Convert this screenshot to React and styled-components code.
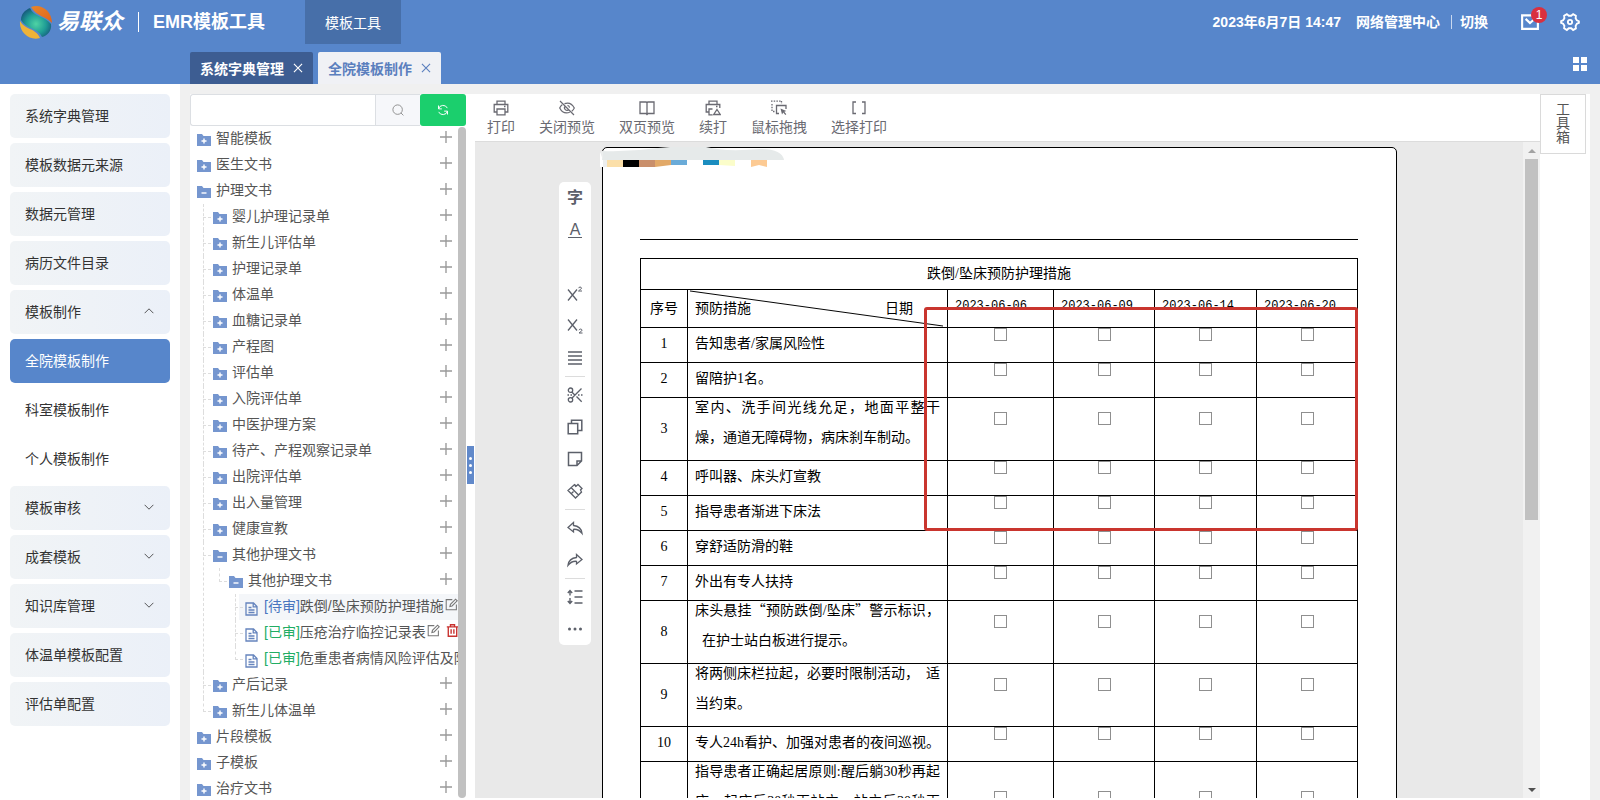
import React from "react";
import styled, { createGlobalStyle, css } from "styled-components";

const UI_FONT = `"Liberation Sans", "Noto Sans CJK SC", sans-serif`;
const DOC_FONT = `"Liberation Serif", "Noto Sans CJK SC", serif`;
const BLUE = "#5786cb";

const GlobalStyle = createGlobalStyle`
  *, *::before, *::after { box-sizing: border-box; }
  html, body { margin: 0; background: #f0f0f0; }
  body { font-family: ${UI_FONT}; font-size: 14px; color: #555; }
  button { font: inherit; color: inherit; border: 0; background: none; padding: 0; cursor: pointer; }
  ul { list-style: none; margin: 0; padding: 0; }
`;

/* ---------- icons ---------- */

const Svg = styled.svg`
  display: block;
  flex: none;
  fill: none;
  stroke: currentColor;
  stroke-width: ${(p) => p.$w || 1.3};
`;

const Icon = ({ size = 16, w, children }) => (
  <Svg viewBox="0 0 16 16" width={size} height={size} $w={w} aria-hidden="true">
    {children}
  </Svg>
);

const LogoMark = () => (
  <svg width="34" height="34" viewBox="0 0 34 34" aria-hidden="true">
    <defs>
      <radialGradient id="teal" cx="50%" cy="55%" r="55%">
        <stop offset="0" stopColor="#4fd3a4" />
        <stop offset="0.6" stopColor="#1f9d96" />
        <stop offset="1" stopColor="#17607f" />
      </radialGradient>
      <linearGradient id="orange" x1="0" y1="0" x2="1" y2="1">
        <stop offset="0" stopColor="#e8862a" />
        <stop offset="1" stopColor="#e0641b" />
      </linearGradient>
    </defs>
    <path d="M12 2 C21 -2 33 5 33 18 C27 11 18 12 12 2Z" fill="url(#orange)" />
    <path d="M11 3 C15 12 26 11 32 19 C33 26 28 31 23 32 C19 23 7 24 2 15 C2 9 6 5 11 3Z" fill="url(#teal)" />
    <path d="M1 16 C6 25 17 23 21 33 C11 36 0 28 1 16Z" fill="#efb338" />
  </svg>
);

const CloseIcon = () => <Icon size={10} w={1.8}><path d="M1.5 1.5l13 13M14.5 1.5l-13 13" /></Icon>;
const ChevronIcon = ({ up }) => <Icon size={10} w={1.3}><path d={up ? "M1 11.500L8 4.500l7 7" : "M1 4.500l7 7 7-7"} /></Icon>;
const SearchIcon = () => <Icon size={12} w={1.2}><circle cx="7.500" cy="7.500" r="6.300" /><path d="M12 12l3.200 3.200" /></Icon>;
const RefreshIcon = () => (
  <Icon size={12} w={1.3}>
    <path d="M2 6.500A6.300 6.300 0 0 1 13.800 5.500M14 9.500A6.300 6.300 0 0 1 2.200 10.500M2 2v4.500h4.500M14 14V9.500H9.500" />
  </Icon>
);
const PlusIcon = () => <Icon size={12} w={1.8}><path d="M8 0v16M0 8h16" /></Icon>;
const MailIcon = () => (
  <Icon size={20} w={1.7}><path d="M9.500 2.700H1.700v10.800h12.600V7.500M4.500 5.500L8 8.800l3-2.600" /></Icon>
);
const GearIcon = () => (
  <Icon size={20} w={1.5}>
    <circle cx="8" cy="8" r="1.700" />
    <path d="M5.500 1.700L7 3h2l1.500-1.300 2.200 1.300-.2 2 1 1.700 1.600.7v1.300l-1.600.7-1 1.700.2 2-2.200 1.300L9 13H7l-1.500 1.400L3.300 13l.2-2-1-1.600-1.600-.7V7.300l1.600-.7 1-1.600-.2-2z" />
  </Icon>
);
const TilesIcon = () => (
  <svg width="14" height="14" viewBox="0 0 14 14" fill="currentColor" aria-hidden="true">
    <path d="M0 0h6v6H0zM8 0h6v6H8zM0 8h6v6H0zM8 8h6v6H8z" />
  </svg>
);
const FolderIcon = ({ open }) => (
  <svg width="14" height="12" viewBox="0 0 14 12" aria-hidden="true">
    <path d="M0 0h5l1.500 2H14v10H0z" fill="#7596cf" />
    <path d={open ? "M4.500 7h5" : "M4.500 7h5M7 4.500v5"} stroke="#fff" strokeWidth="1.400" />
  </svg>
);
const DocIcon = () => (
  <svg width="13" height="14" viewBox="0 0 13 14" fill="none" stroke="#6584bd" strokeWidth="1.300" aria-hidden="true">
    <path d="M1 1h7.500L12 4.500V13H1zM8.200 1v3.800H12M3.500 5.500h3M3.500 8h6M3.500 10.500h6" />
  </svg>
);
const EditIcon = () => (
  <Icon size={13} w={1.3}><path d="M9 2H1.500v12.500H14V8M6 10.500l.7-2.700L13 1.500l2 2-6.300 6.300z" /></Icon>
);
const TrashIcon = () => (
  <Icon size={13} w={1.7}><path d="M1 3.500h14M5.500 3.500V1h5v2.500M2.800 3.500V15h10.400V3.500M6.300 6.500v5.500M9.700 6.500v5.500" /></Icon>
);

const PrintIcon = () => <Icon><path d="M4 4V1.200h8V4M4 12H1.200V4.500h13.600V12H12M4 9h8v5.800H4zM11 6.500h1.500" /></Icon>;
const EyeOffIcon = () => (
  <Icon w={1.2}><path d="M1 1l14 14M5.500 3.600C10 2 13.500 4.500 15.300 8c-.6 1.300-1.500 2.400-2.500 3.200M10.800 12.300C6 14 2.500 11.500.7 8 1.300 6.700 2.100 5.600 3.200 4.700M6.300 6a2.600 2.600 0 0 0 3.700 3.700M8.500 5.400a2.600 2.600 0 0 1 2.100 2.200" /></Icon>
);
const BookIcon = () => <Icon><path d="M1 2h6.200L8 2.800 8.800 2H15v11.500H9L8 14.500l-1-1H1zM8 3v11" /></Icon>;
const ContinueIcon = () => (
  <Icon><path d="M4 4V1.200h8V4M4 12H1.200V4.500h13.600V8M7.500 9H4v5.800h3.500M11 6.500h1.500M12 9.500l3.300 5H8.700z" /></Icon>
);
const DragIcon = () => (
  <Icon>
    <path d="M0 1.200h10M1 4v8M3.500 11.500H1M10.500 1v3" strokeDasharray="1.500 1.200" />
    <path d="M8 13.500H5.500v-8h9.500V9" />
    <path d="M9.500 8.500l1.500 6 1.300-2 2 2.500 1-.8-2-2.400 2-.8z" fill="currentColor" stroke="none" />
  </Icon>
);
const BracketsIcon = () => <Icon><path d="M5 2H2v11.500h3M11 2h3v11.500h-3" /></Icon>;

const SuperIcon = () => (
  <Icon><path d="M1 3.500l9 11M10 3.500l-9 11" /><path d="M11.500 2.200c.3-1.500 3-1.500 3 0 0 .9-2 1.700-3 2.800h3.500" strokeWidth="1" /></Icon>
);
const SubIcon = () => (
  <Icon><path d="M1 1.500l9 11M10 1.500l-9 11" /><path d="M12 12.200c.3-1.500 3-1.500 3 0 0 .9-2 1.700-3 2.800h3.500" strokeWidth="1" /></Icon>
);
const JustifyIcon = () => <Icon w={1.3}><path d="M1 2h14M1 6h14M1 10h14M1 14h14" /></Icon>;
const ScissorsIcon = () => (
  <Icon w={1.3}>
    <circle cx="3.500" cy="3.200" r="2.200" /><circle cx="3.500" cy="12.800" r="2.200" />
    <path d="M4.800 5l3 3M4.800 11.200L14.500 1.500M9.500 9.500l5.200 5.200M11 8h1.500M14 8h1.500M.5 8H2M3.500 8H5" />
  </Icon>
);
const CopyIcon = () => <Icon w={1.5}><path d="M1.200 4.500h9.500v10.300H1.200zM4.500 4.500V1.200h10.300v10.300h-4" /></Icon>;
const NoteIcon = () => <Icon w={1.5}><path d="M1.500 1.500h13v8.500l-4.500 4.500H1.500zM14.500 10H10v4.500" /></Icon>;
const BrushIcon = () => (
  <Icon w={1.3}><path d="M1 7.500L8.500 15l6-6-1-2L15 5.500 12.500 3 11 1.500 9.500 3 7.500 1.500zM4 4.500l7.500 7.500M7.500 1.500l1.500 2.500M4.500 10.500l2-2" /></Icon>
);
const UndoIcon = () => <Icon><path d="M6.500 2.500L1 7.500l5.500 4.500V9.300c3.500-.3 6 .8 8.500 4-.5-4-3-7.300-8.500-7.800z" /></Icon>;
const RedoIcon = () => <Icon><path d="M9.500 2.500L15 7.500 9.500 12V9.300c-3.500-.3-6 .8-8.500 4 .5-4 3-7.300 8.500-7.800z" /></Icon>;
const LineHeightIcon = () => (
  <Icon w={1.4}><path d="M3 2v4.500M.8 4L3 1.500 5.200 4M3 9v5M.8 12L3 14.500 5.200 12M7.500 2H15.500M7.500 8h8M7.500 14h8" /></Icon>
);
const DotsIcon = () => (
  <Icon><g fill="currentColor" stroke="none"><circle cx="2.500" cy="8" r="1.500" /><circle cx="8" cy="8" r="1.500" /><circle cx="13.500" cy="8" r="1.500" /></g></Icon>
);

/* ---------- header ---------- */

const Shell = styled.div`
  display: flex;
  flex-direction: column;
  height: 100vh;
  overflow: hidden;
`;

const Header = styled.header`
  flex: none;
  background: ${BLUE};
  color: #fff;
`;

const TopBar = styled.div`
  display: flex;
  align-items: center;
  height: 44px;
  padding-right: 20px;
`;

const Brand = styled.div`
  display: flex;
  align-items: center;
  width: 305px;
  padding-left: 19px;
`;

const BrandName = styled.span`
  margin-left: 4px;
  font-size: 22px;
  font-style: italic;
  font-weight: bold;
  line-height: 32px;
`;

const BrandTitle = styled.h1`
  margin: 0 0 0 15px;
  padding-left: 14px;
  border-left: 1px solid #fff;
  font-size: 18px;
  line-height: 20px;
`;

const ModuleButton = styled.button`
  align-self: stretch;
  width: 96px;
  background: #476fa9;
`;

const Account = styled.div`
  display: flex;
  align-items: center;
  margin-left: auto;
  font-weight: bold;
  line-height: 20px;
`;

const Center = styled.span`
  margin-left: 15px;
`;

const SwitchLink = styled.a`
  margin-left: 11px;
  padding-left: 8px;
  border-left: 1px solid #c9d8ef;
  color: inherit;
  line-height: 14px;
  text-decoration: none;
`;

const HeaderIconButton = styled.button`
  position: relative;
  margin-left: ${(p) => p.$gap}px;
`;

const Badge = styled.span`
  position: absolute;
  top: -5px;
  right: -7px;
  width: 16px;
  height: 16px;
  border-radius: 8px;
  background: #d9303f;
  font-size: 12px;
  font-weight: normal;
  line-height: 16px;
  text-align: center;
`;

const TabBar = styled.div`
  display: flex;
  align-items: flex-end;
  gap: 5px;
  height: 40px;
  padding: 0 13px 0 190px;
`;

const Tab = styled.div`
  display: flex;
  align-items: center;
  gap: 9px;
  height: 32px;
  padding: 0 10px;
  border-radius: 2px 2px 0 0;
  font-weight: bold;
  background: ${(p) => (p.$active ? "#f0f1f5" : "#3d5d92")};
  color: ${(p) => (p.$active ? "#5b7fbe" : "#fff")};
`;

const TilesButton = styled.button`
  align-self: center;
  margin-left: auto;
  line-height: 0;
`;

/* ---------- side navigation ---------- */

const Body = styled.div`
  flex: 1;
  display: flex;
  min-height: 0;
`;

const SideNav = styled.nav`
  flex: none;
  display: flex;
  flex-direction: column;
  gap: 5px;
  width: 180px;
  padding: 10px;
  background: #fff;
`;

const NavButton = styled.button`
  display: flex;
  align-items: center;
  justify-content: space-between;
  height: 44px;
  padding: 0 16px 2px 15px;
  border-radius: 5px;
  color: #333;
  background: linear-gradient(90deg, #f1f4f6, #ebf0f8);
  ${(p) => p.$kind === "sub" && css`background: none;`}
  ${(p) => p.$kind === "active" && css`background: ${BLUE}; color: #fff;`}
`;

/* ---------- template tree ---------- */

const Main = styled.main`
  flex: 1;
  display: flex;
  min-width: 0;
  padding: 10px 10px 0;
`;

const TreePanel = styled.section`
  flex: none;
  display: flex;
  flex-direction: column;
  width: 276px;
  padding-bottom: 2px;
  background: #fff;
`;

const SearchBar = styled.form`
  flex: none;
  display: flex;
  height: 32px;
`;

const SearchInput = styled.input`
  flex: 1;
  min-width: 0;
  border: 1px solid #dcdfe3;
  border-right: 0;
  border-radius: 3px 0 0 3px;
  padding: 0 10px;
  font: inherit;
  outline: none;
`;

const SearchButton = styled.button`
  display: grid;
  place-items: center;
  width: 45px;
  border: 1px solid #dcdfe3;
  border-right: 0;
  background: #f6f7fa;
  color: #888;
`;

const RefreshButton = styled.button`
  display: grid;
  place-items: center;
  width: 46px;
  border-radius: 3px;
  background: #1bcf6d;
  color: #fff;
`;

const TreeScroll = styled.div`
  flex: 1;
  display: flex;
  min-height: 0;
`;

const TreeRoot = styled.ul`
  flex: 1;
  min-width: 0;
  overflow: hidden;
`;

const Branch = styled.ul`
  margin-left: 16px;
`;

const TreeItem = styled.li`
  position: relative;

  /* guide lines joining a nested item to its parent */
  ${Branch} > &::before {
    content: "";
    position: absolute;
    left: -3px;
    top: 0;
    bottom: 0;
    border-left: 1px dashed #ddd;
  }
  ${Branch} > &:last-child::before {
    bottom: auto;
    height: 14px;
  }
  ${Branch} > &::after {
    content: "";
    position: absolute;
    left: -3px;
    top: 13px;
    width: 8px;
    border-top: 1px dashed #ddd;
  }
`;

const TreeRow = styled.div`
  display: flex;
  align-items: flex-start;
  height: 26px;
  margin-left: 1px;
  padding: 0 6px;
  line-height: 24px;
  white-space: nowrap;
  background: ${(p) => (p.$selected ? "#f4f6f9" : "none")};
`;

const TreeGlyph = styled.span`
  flex: none;
  width: 19px;
  padding-top: 8px;
  line-height: 0;
`;

const Status = styled.span`
  color: ${(p) => (p.$done ? "#22ad64" : "#4a76bf")};
`;

const AddButton = styled.button`
  margin: 5px 0 0 auto;
  color: #999;
`;

const RowAction = styled.button`
  margin: ${(p) => (p.$danger ? "4px 0 0 6px" : "4px 0 0 1px")};
  color: ${(p) => (p.$danger ? "#c8322f" : "#777")};
`;

const TreeThumb = styled.div`
  flex: none;
  width: 8px;
  margin-top: 1px;
  border-radius: 4px;
  background: #c1c1c1;
`;

const Splitter = styled.div`
  flex: none;
  display: flex;
  align-items: center;
  justify-content: center;
  width: 9px;
  padding-top: 36px;
  background: #fff;
`;

const SplitHandle = styled.button`
  display: flex;
  flex-direction: column;
  align-items: center;
  justify-content: center;
  gap: 4px;
  width: 7px;
  height: 38px;
  background: #6189ca;
`;

const Dot = styled.i`
  width: 3px;
  height: 3px;
  border-radius: 2px;
  background: #fff;
`;

/* ---------- work area ---------- */

const Work = styled.section`
  flex: 1;
  display: flex;
  flex-direction: column;
  min-width: 0;
  padding-bottom: 2px;
  background: #fff;
`;

const Toolbar = styled.div`
  flex: none;
  display: flex;
  gap: 24px;
  height: 48px;
  padding: 6px 12px 0;
  border-bottom: 1px solid #dcdcdc;
`;

const ToolButton = styled.button`
  display: flex;
  flex-direction: column;
  align-items: center;
  height: 36px;
  color: #6a6a72;
  line-height: 22px;
`;

const Viewport = styled.div`
  flex: 1;
  display: flex;
  min-height: 0;
  background: #e9e9e9;
`;

const Canvas = styled.div`
  flex: 1;
  min-width: 0;
  padding: 5px 0 0 1px;
  overflow: hidden;
`;

const ScrollTrack = styled.div`
  flex: none;
  display: flex;
  flex-direction: column;
  align-items: center;
  width: 17px;
  background: #f1f1f1;
`;

const ScrollArrow = styled.span`
  display: grid;
  place-items: center;
  height: 17px;
  &::before {
    content: "";
    border: 4px solid transparent;
    ${(p) => (p.$down
      ? css`border-top-color: #505050; border-bottom: 0;`
      : css`border-bottom-color: #a3a3a3; border-top: 0;`)}
  }
`;

const ScrollThumb = styled.div`
  width: 13px;
  height: 55%;
  margin-bottom: auto;
  background: #c1c1c1;
`;

const Paper = styled.article`
  position: relative;
  width: 795px;
  margin: 0 auto;
  padding: 0 38px 40px 37px;
  border: 1px solid #000;
  border-radius: 5px;
  background: #fff;
  color: #000;
  font-family: ${DOC_FONT};
`;

const PageHead = styled.div`
  height: 92px;
  margin-bottom: 18px;
  border-bottom: 1px solid #000;
`;

const Redaction = styled.svg`
  position: absolute;
  top: -1px;
  left: -3px;
`;

const FloatBar = styled.div`
  position: absolute;
  top: 34px;
  left: -44px;
  display: flex;
  flex-direction: column;
  width: 32px;
  border-radius: 5px;
  background: #fff;
  color: #5c606a;
  font-family: ${UI_FONT};
`;

const FloatButton = styled.button`
  display: grid;
  place-items: center;
  height: 32px;
  font-size: 16px;
  font-weight: ${(p) => (p.$bold ? "bold" : "normal")};
  line-height: 18px;
`;

const FloatGap = styled.span`
  height: 32px;
`;

const FloatRule = styled.hr`
  width: 20px;
  height: 1px;
  margin: 2px auto;
  border: 0;
  background: #dcdcdc;
`;

const Underlined = styled.span`
  width: 14px;
  border-bottom: 1px solid currentColor;
  line-height: 15px;
`;

const FormArea = styled.div`
  position: relative;
`;

const FormTable = styled.table`
  width: 100%;
  table-layout: fixed;
  border-collapse: collapse;
`;

const Column = styled.col`
  width: ${(p) => p.$w}px;
`;

const Cell = styled.td`
  height: ${(p) => p.$h || 35}px;
  padding: 0 7px ${(p) => (p.$raised ? 2 : 0)}px;
  border: 1px solid #000;
  font-weight: normal;
  line-height: 30px;
  text-align: ${(p) => (p.$text ? "left" : "center")};
  vertical-align: ${(p) => (p.$top ? "top" : "middle")};
  white-space: nowrap;
`;

const HeadCell = styled(Cell).attrs({ as: "th" })``;

const DateCell = styled(HeadCell)`
  font-family: "Liberation Mono", monospace;
  font-size: 12px;
  line-height: 32px;
  text-align: left;
  vertical-align: top;
`;

const SplitCell = styled(HeadCell)`
  position: relative;
`;

const SplitLabels = styled.div`
  display: flex;
  justify-content: space-between;
  padding-right: 27px;
`;

const Diagonal = styled.svg`
  position: absolute;
  inset: 0;
  width: 100%;
  height: 100%;
`;

const Lines = styled.div`
  margin-top: ${(p) => (p.$multi ? -5 : 0)}px;
`;

const Line = styled.div`
  height: 30px;
  text-align-last: ${(p) => (p.$justify ? "justify" : "auto")};
`;

const FullWidth = styled.span`
  font-family: "Noto Sans CJK SC", sans-serif;
  line-height: 14px;
`;

const CheckBox = styled.input`
  appearance: none;
  display: block;
  width: 13px;
  height: 13px;
  margin: 0 auto 21px;
  border: 1px solid #8f8f8f;
  background: #fff;
`;

const Highlight = styled.div`
  position: absolute;
  top: 49px;
  right: 0;
  width: 434px;
  height: 224px;
  border: 3px solid #c9352e;
  border-radius: 3px;
  pointer-events: none;
`;

const ToolboxRail = styled.aside`
  flex: none;
  width: 50px;
  background: #fff;
`;

const ToolboxTab = styled.button`
  width: 46px;
  height: 60px;
  padding: 0 15px 2px;
  border: 1px solid #dadada;
  line-height: 14px;
`;

/* ---------- data ---------- */

const NAV = [
  ["系统字典管理"], ["模板数据元来源"], ["数据元管理"], ["病历文件目录"],
  ["模板制作", "open"], ["全院模板制作", "active"], ["科室模板制作", "sub"], ["个人模板制作", "sub"],
  ["模板审核", "closed"], ["成套模板", "closed"], ["知识库管理", "closed"],
  ["体温单模板配置"], ["评估单配置"],
];

const leaf = (name) => ({ name });

const TREE = [
  leaf("智能模板"),
  leaf("医生文书"),
  {
    name: "护理文书",
    children: [
      ...["婴儿护理记录单", "新生儿评估单", "护理记录单", "体温单", "血糖记录单", "产程图", "评估单",
        "入院评估单", "中医护理方案", "待产、产程观察记录单", "出院评估单", "出入量管理", "健康宣教"].map(leaf),
      {
        name: "其他护理文书",
        children: [{
          name: "其他护理文书",
          children: [
            { name: "跌倒/坠床预防护理措施", status: "待审", selected: true, edit: true },
            { name: "压疮治疗临控记录表", status: "已审", edit: true, remove: true },
            { name: "危重患者病情风险评估及防", status: "已审" },
          ],
        }],
      },
      leaf("产后记录"),
      leaf("新生儿体温单"),
    ],
  },
  leaf("片段模板"),
  leaf("子模板"),
  leaf("治疗文书"),
];

const TOOLS = [
  ["打印", PrintIcon], ["关闭预览", EyeOffIcon], ["双页预览", BookIcon],
  ["续打", ContinueIcon], ["鼠标拖拽", DragIcon], ["选择打印", BracketsIcon],
];

const COLUMNS = [47, 260, 106, 101, 102, 101];

const DATES = ["2023-06-06", "2023-06-09", "2023-06-14", "2023-06-20"];

const MEASURES = [
  ["告知患者/家属风险性"],
  ["留陪护1名。"],
  ["室内、洗手间光线允足，地面平整干", "燥，通道无障碍物，病床刹车制动。"],
  ["呼叫器、床头灯宣教"],
  ["指导患者渐进下床法"],
  ["穿舒适防滑的鞋"],
  ["外出有专人扶持"],
  [<>床头悬挂<FullWidth>“</FullWidth>预防跌倒/坠床<FullWidth>”</FullWidth>警示标识，</>, "\u00a0\u00a0在护士站白板进行提示。"],
  ["将两侧床栏拉起，必要时限制活动，\u00a0\u00a0适", "当约束。"],
  ["专人24h看护、加强对患者的夜间巡视。"],
  ["指导患者正确起居原则:醒后躺30秒再起", "床，起床后30秒再站立，站立后30秒再", "行走。"],
];

const ROW_HEIGHT = { 1: 35, 2: 63, 3: 92 };

/* ---------- parts ---------- */

function TreeNode({ node }) {
  const open = Boolean(node.children);
  return (
    <TreeItem>
      <TreeRow $selected={node.selected}>
        <TreeGlyph>{node.status ? <DocIcon /> : <FolderIcon open={open} />}</TreeGlyph>
        {node.status && <Status $done={node.status === "已审"}>[{node.status}]</Status>}
        <span>{node.name}</span>
        {node.edit && <RowAction aria-label="编辑"><EditIcon /></RowAction>}
        {node.remove && <RowAction $danger aria-label="删除"><TrashIcon /></RowAction>}
        {!node.status && <AddButton aria-label="新增"><PlusIcon /></AddButton>}
      </TreeRow>
      {open && <Branch>{node.children.map((c, i) => <TreeNode key={i} node={c} />)}</Branch>}
    </TreeItem>
  );
}

function FloatTools() {
  return (
    <FloatBar>
      <FloatButton $bold aria-label="字体">字</FloatButton>
      <FloatButton aria-label="字体颜色"><Underlined>A</Underlined></FloatButton>
      <FloatGap />
      <FloatButton aria-label="上标"><SuperIcon /></FloatButton>
      <FloatButton aria-label="下标"><SubIcon /></FloatButton>
      <FloatButton aria-label="对齐"><JustifyIcon /></FloatButton>
      <FloatRule />
      <FloatButton aria-label="剪切"><ScissorsIcon /></FloatButton>
      <FloatButton aria-label="复制"><CopyIcon /></FloatButton>
      <FloatButton aria-label="粘贴"><NoteIcon /></FloatButton>
      <FloatButton aria-label="格式刷"><BrushIcon /></FloatButton>
      <FloatRule />
      <FloatButton aria-label="撤销"><UndoIcon /></FloatButton>
      <FloatButton aria-label="重做"><RedoIcon /></FloatButton>
      <FloatRule />
      <FloatButton aria-label="行距"><LineHeightIcon /></FloatButton>
      <FloatButton aria-label="更多"><DotsIcon /></FloatButton>
    </FloatBar>
  );
}

function MeasureForm() {
  return (
    <FormArea>
      <FormTable>
        <colgroup>{COLUMNS.map((w, i) => <Column key={i} $w={w} />)}</colgroup>
        <thead>
          <tr><HeadCell colSpan={6} $h={31}>跌倒/坠床预防护理措施</HeadCell></tr>
          <tr>
            <HeadCell $h={38}>序号</HeadCell>
            <SplitCell $h={38}>
              <Diagonal viewBox="0 0 260 38" preserveAspectRatio="none" aria-hidden="true">
                <path d="M2 1L256 37" stroke="#000" />
              </Diagonal>
              <SplitLabels><span>预防措施</span><span>日期</span></SplitLabels>
            </SplitCell>
            {DATES.map((d) => <DateCell key={d} $h={38}>{d}</DateCell>)}
          </tr>
        </thead>
        <tbody>
          {MEASURES.map((lines, i) => {
            const h = ROW_HEIGHT[lines.length];
            const multi = lines.length > 1;
            return (
              <tr key={i}>
                <Cell $h={h} $raised={!multi}>{i + 1}</Cell>
                <Cell $h={h} $text $top={multi} $raised={!multi}>
                  <Lines $multi={multi}>
                    {lines.map((l, n) => <Line key={n} $justify={n < lines.length - 1}>{l}</Line>)}
                  </Lines>
                </Cell>
                {DATES.map((d) => (
                  <Cell key={d} $h={h}><CheckBox type="checkbox" aria-label={`${d} 第${i + 1}项`} /></Cell>
                ))}
              </tr>
            );
          })}
        </tbody>
      </FormTable>
      <Highlight />
    </FormArea>
  );
}

const RedactedHeader = () => (
  <Redaction width="190" height="26" viewBox="0 0 190 26" aria-hidden="true">
    <path d="M0 6h150v14H0z" fill="#fff" />
    <path d="M2 4Q30 5 58 1L70 0H106Q125 5 160 2Q182 2 184 13H2z" fill="#e6eaea" />
    <path d="M0 5h3v15h4v-7h-4z" fill="#eceeee" />
    <path d="M7 13h16v7H7z" fill="#fbdfa9" />
    <path d="M23 13h16v7H23z" fill="#000" />
    <path d="M39 13h16v7H39z" fill="#c98f6b" />
    <path d="M55 13h16v5l-16 2z" fill="#e2a968" />
    <path d="M71 13h16v5H71z" fill="#6aabd8" />
    <path d="M103 13h16v5h-16z" fill="#1b8dbf" />
    <path d="M119 13h16v6l-16-1z" fill="#fbfdca" />
    <path d="M151 13h16v7l-8-2-8 2z" fill="#fcca93" />
  </Redaction>
);

export default function App() {
  return (
    <Shell>
      <GlobalStyle />
      <Header>
        <TopBar>
          <Brand>
            <LogoMark />
            <BrandName>易联众</BrandName>
            <BrandTitle>EMR模板工具</BrandTitle>
          </Brand>
          <ModuleButton>模板工具</ModuleButton>
          <Account>
            <span>2023年6月7日 14:47</span>
            <Center>网络管理中心</Center>
            <SwitchLink href="#switch">切换</SwitchLink>
            <HeaderIconButton $gap={32} aria-label="消息"><MailIcon /><Badge>1</Badge></HeaderIconButton>
            <HeaderIconButton $gap={20} aria-label="设置"><GearIcon /></HeaderIconButton>
          </Account>
        </TopBar>
        <TabBar>
          <Tab><span>系统字典管理</span><button aria-label="关闭"><CloseIcon /></button></Tab>
          <Tab $active><span>全院模板制作</span><button aria-label="关闭"><CloseIcon /></button></Tab>
          <TilesButton aria-label="全部页签"><TilesIcon /></TilesButton>
        </TabBar>
      </Header>

      <Body>
        <SideNav>
          {NAV.map(([name, kind]) => (
            <NavButton key={name} $kind={kind}>
              <span>{name}</span>
              {(kind === "open" || kind === "closed") && <ChevronIcon up={kind === "open"} />}
            </NavButton>
          ))}
        </SideNav>

        <Main>
          <TreePanel>
            <SearchBar onSubmit={(e) => e.preventDefault()}>
              <SearchInput aria-label="搜索模板" />
              <SearchButton type="submit" aria-label="搜索"><SearchIcon /></SearchButton>
              <RefreshButton type="button" aria-label="刷新"><RefreshIcon /></RefreshButton>
            </SearchBar>
            <TreeScroll>
              <TreeRoot>{TREE.map((n, i) => <TreeNode key={i} node={n} />)}</TreeRoot>
              <TreeThumb />
            </TreeScroll>
          </TreePanel>

          <Splitter>
            <SplitHandle aria-label="折叠"><Dot /><Dot /><Dot /></SplitHandle>
          </Splitter>

          <Work>
            <Toolbar>
              {TOOLS.map(([name, Glyph]) => (
                <ToolButton key={name}><Glyph /><span>{name}</span></ToolButton>
              ))}
            </Toolbar>
            <Viewport>
              <Canvas>
                <Paper>
                  <PageHead />
                  <MeasureForm />
                  <RedactedHeader />
                  <FloatTools />
                </Paper>
              </Canvas>
              <ScrollTrack>
                <ScrollArrow />
                <ScrollThumb />
                <ScrollArrow $down />
              </ScrollTrack>
            </Viewport>
          </Work>

          <ToolboxRail><ToolboxTab>工具箱</ToolboxTab></ToolboxRail>
        </Main>
      </Body>
    </Shell>
  );
}
